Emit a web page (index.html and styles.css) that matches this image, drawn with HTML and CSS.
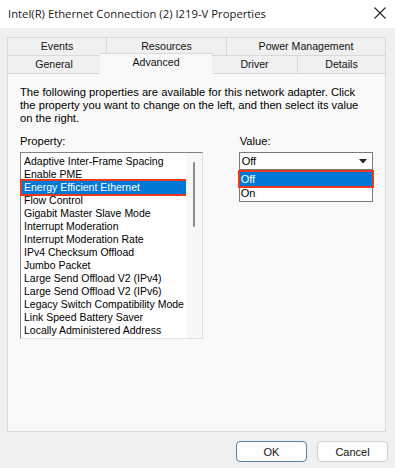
FILE: index.html
```html
<!DOCTYPE html>
<html lang="en">

<head>
    <meta charset="UTF-8">
    <title>Intel(R) Ethernet Connection (2) I219-V Properties</title>
    <link rel="stylesheet" href="styles.css">
</head>

<body>
    <div class="window">
        <div class="titlebar">
            <span class="title">Intel(R) Ethernet Connection (2) I219-V Properties</span>
            <svg class="close" width="12" height="12" viewBox="0 0 12 12">
                <path d="M0.5 0.5 L11.5 11.5 M11.5 0.5 L0.5 11.5" stroke="#222" stroke-width="1.1" fill="none" />
            </svg>
        </div>

        <div class="body">
            <div class="tabs">
                <div class="tab-row">
                    <div class="tab w-events">Events</div>
                    <div class="tab w-resources">Resources</div>
                    <div class="tab w-power">Power Management</div>
                </div>
                <div class="tab-row lower">
                    <div class="tab w-general">General</div>
                    <div class="tab w-advanced selected">Advanced</div>
                    <div class="tab w-driver">Driver</div>
                    <div class="tab w-details">Details</div>
                </div>
            </div>

            <div class="panel">
                <p class="intro">The following properties are available for this network adapter. Click<br>
                    the property you want to change on the left, and then select its value<br>
                    on the right.</p>

                <div class="columns">
                    <div class="prop-col">
                        <div class="label">Property:</div>
                        <div class="listbox">
                            <ul class="items">
                                <li>Adaptive Inter-Frame Spacing</li>
                                <li>Enable PME</li>
                                <li class="active">Energy Efficient Ethernet</li>
                                <li>Flow Control</li>
                                <li>Gigabit Master Slave Mode</li>
                                <li>Interrupt Moderation</li>
                                <li>Interrupt Moderation Rate</li>
                                <li>IPv4 Checksum Offload</li>
                                <li>Jumbo Packet</li>
                                <li>Large Send Offload V2 (IPv4)</li>
                                <li>Large Send Offload V2 (IPv6)</li>
                                <li>Legacy Switch Compatibility Mode</li>
                                <li>Link Speed Battery Saver</li>
                                <li>Locally Administered Address</li>
                            </ul>
                            <div class="scrollbar">
                                <div class="thumb"></div>
                            </div>
                        </div>
                    </div>

                    <div class="value-col">
                        <div class="label">Value:</div>
                        <div class="combo">
                            <span>Off</span>
                            <svg class="arrow" width="8" height="5" viewBox="0 0 8 5">
                                <path d="M0 0 L8 0 L4 4.5 Z" fill="#222" />
                            </svg>
                        </div>
                        <ul class="dropdown">
                            <li class="active">Off</li>
                            <li>On</li>
                        </ul>
                    </div>
                </div>
            </div>

            <div class="buttons">
                <button class="default">OK</button>
                <button>Cancel</button>
            </div>
        </div>
    </div>
</body>

</html>
```

FILE: styles.css
```css
body {
    margin: 0;
    font-family: "Liberation Sans", Arial, sans-serif;
    font-size: 11px;
    color: #000;
    background-color: #f0f0f0;
}

.window {
    width: 395px;
    height: 468px;
    display: flex;
    flex-direction: column;
}

.titlebar {
    height: 28px;
    background-color: #fff;
    display: flex;
    align-items: center;
    justify-content: space-between;
    padding: 0 9px 2px 8px;
    box-sizing: border-box;
}

.title {
    font-family: "Open Sans", "Noto Sans", sans-serif;
    font-size: 11.3px;
    color: #1a1a1a;
}

.body {
    flex: 1;
    padding: 9px 9px 0 7px;
}

/* tabs */
.tab-row {
    display: flex;
    height: 18px;
}

.tab-row.lower {
    position: relative;
    z-index: 1;
}

.tab {
    box-sizing: border-box;
    border: 1px solid #d9d9d9;
    border-bottom: none;
    background-color: #f0f0f0;
    text-align: center;
    line-height: 17px;
    font-size: 10.6px;
    color: #111;
}

.tab-row .tab + .tab {
    border-left: none;
}

.w-events { width: 100px; }
.w-resources { width: 120px; }
.w-power { width: 159px; }
.w-general { width: 94px; }
.w-advanced { width: 111px; }
.w-driver { width: 86px; }
.w-details { width: 88px; }

.tab.selected {
    background-color: #f9f9f9;
    height: 21px;
    margin-top: -2px;
    line-height: 17px;
    border-left: 1px solid #d9d9d9;
    margin-left: -1px;
    margin-right: -1px;
    width: 113px;
}

/* panel */
.panel {
    box-sizing: border-box;
    height: 359px;
    border: 1px solid #d9d9d9;
    background-color: #f9f9f9;
    padding: 12px 12px 0 12px;
}

.intro {
    margin: 0;
    font-size: 11.2px;
    line-height: 13px;
    white-space: nowrap;
}

.columns {
    display: flex;
    margin-top: 10px;
}

.prop-col {
    width: 185px;
}

.value-col {
    margin-left: 36px;
    width: 136px;
}

.label {
    height: 13px;
    line-height: 13px;
    margin-bottom: 4px;
    font-size: 11.2px;
}

.value-col .label {
    padding-left: 1px;
}

.listbox {
    box-sizing: border-box;
    height: 187px;
    border: 1px solid #828282;
    border-right-color: #e0e0e0;
    border-bottom-color: #e0e0e0;
    background-color: #fff;
    display: flex;
}

.items {
    list-style: none;
    margin: 0;
    padding: 2px 0 0 1px;
    flex: 1;
}

.items li {
    height: 13px;
    line-height: 13px;
    padding-left: 2px;
    font-size: 10.5px;
    white-space: nowrap;
}

li.active {
    background-color: #0078d7;
    color: #fff;
    outline: 2px solid #e8391d;
}

.scrollbar {
    width: 16px;
    background-color: #f7f7f7;
    display: flex;
    justify-content: center;
}

.thumb {
    width: 2px;
    height: 65px;
    margin-top: 9px;
    background-color: #8a8a8a;
    border-radius: 1px;
}

.combo {
    box-sizing: border-box;
    height: 18px;
    border: 1px solid #7a7a7a;
    background-color: #fff;
    display: flex;
    align-items: center;
    justify-content: space-between;
    padding: 0 5px 0 2px;
}

.dropdown {
    list-style: none;
    margin: 0;
    box-sizing: border-box;
    border: 1px solid #7a7a7a;
    border-top: none;
    background-color: #fff;
    padding: 2px 0 1px 0;
}

.dropdown li {
    height: 14px;
    line-height: 14px;
    padding-left: 1px;
}

/* buttons */
.buttons {
    display: flex;
    justify-content: flex-end;
    gap: 10px;
    margin-top: 9px;
    margin-right: -2px;
}

button {
    width: 71px;
    height: 21px;
    font-family: "Liberation Sans", Arial, sans-serif;
    font-size: 11px;
    color: #111;
    background-color: #fdfdfd;
    border: 1px solid #d0d0d0;
    border-radius: 4px;
    padding: 0;
}

button.default {
    border-color: #5a82a5;
}
```
